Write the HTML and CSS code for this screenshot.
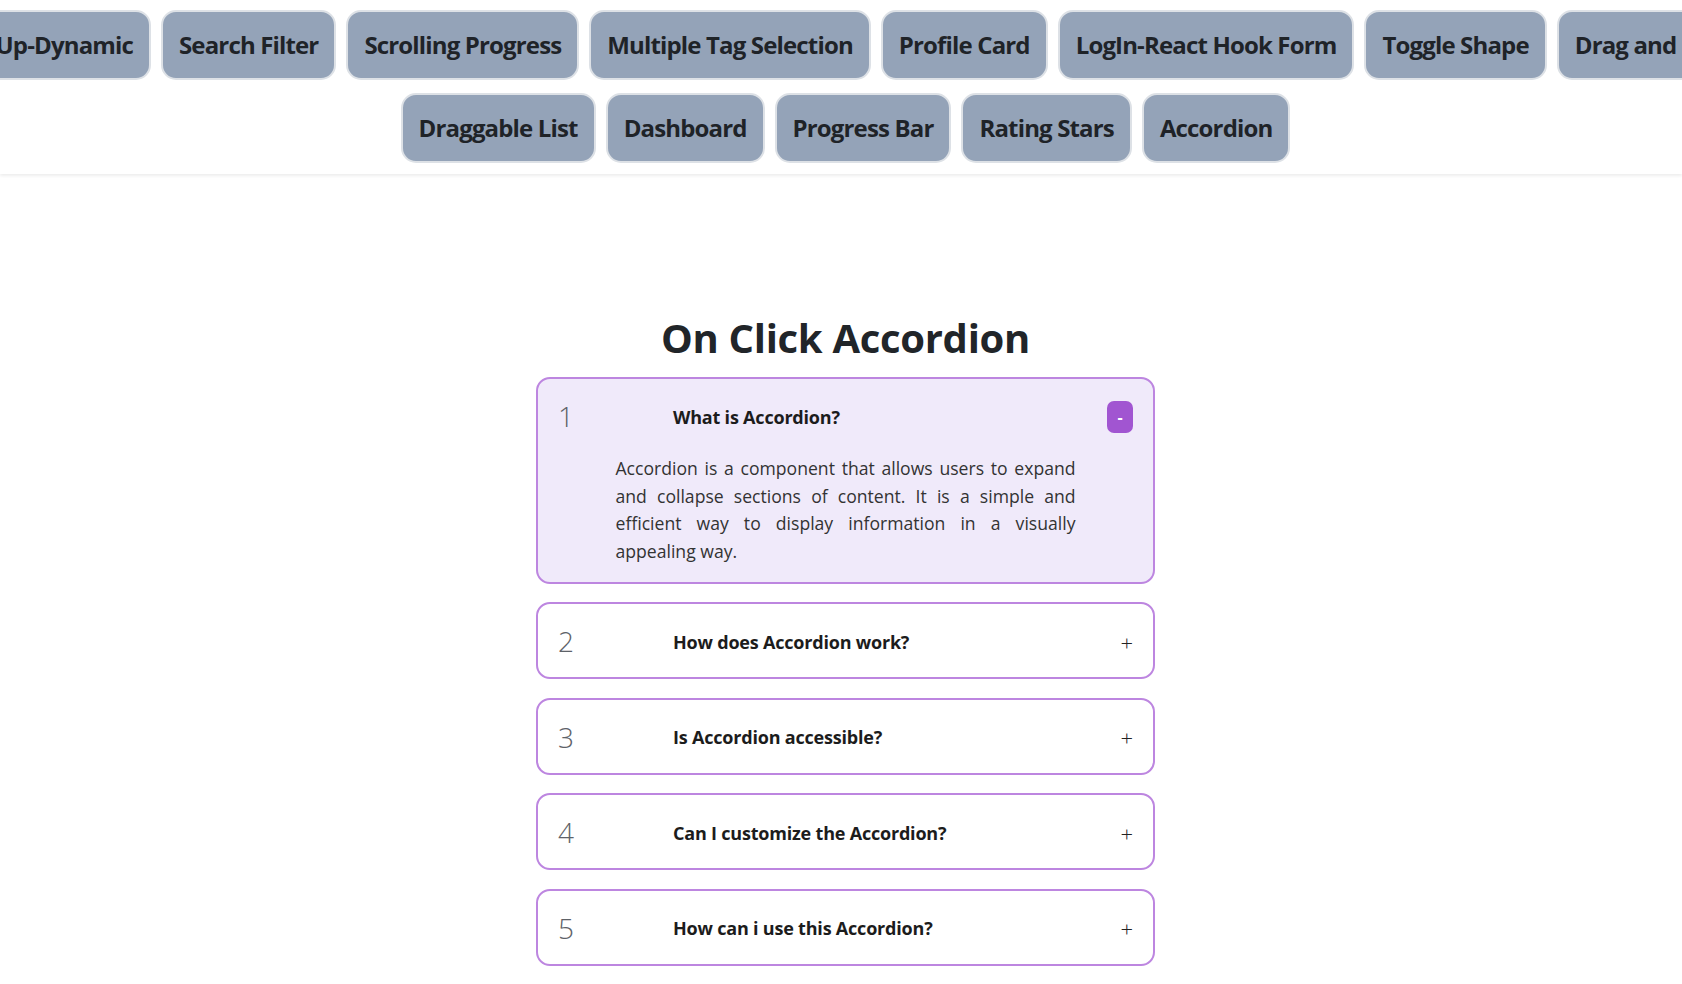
FILE: index.html
```html
<!DOCTYPE html>
<html lang="en">
<head>
<meta charset="utf-8">
<title>On Click Accordion</title>
<link rel="stylesheet" href="styles.css">
</head>
<body>
<nav class="topnav">
  <div class="nav-row nav-row-top">
    <div class="nav-lead"><a class="nav-btn" href="#">Pop-Up-Dynamic</a></div>
    <a class="nav-btn" href="#">Search Filter</a>
    <a class="nav-btn" href="#">Scrolling Progress</a>
    <a class="nav-btn" href="#">Multiple Tag Selection</a>
    <a class="nav-btn" href="#">Profile Card</a>
    <a class="nav-btn" href="#">LogIn-React Hook Form</a>
    <a class="nav-btn" href="#">Toggle Shape</a>
    <a class="nav-btn" href="#">Drag and Drop</a>
  </div>
  <div class="nav-row nav-row-bottom">
    <a class="nav-btn" href="#">Draggable List</a>
    <a class="nav-btn" href="#">Dashboard</a>
    <a class="nav-btn" href="#">Progress Bar</a>
    <a class="nav-btn" href="#">Rating Stars</a>
    <a class="nav-btn" href="#">Accordion</a>
  </div>
</nav>
<main class="page">
  <h1 class="title">On Click Accordion</h1>
  <div class="accordion">
    <div class="acc-item open">
      <div class="acc-head">
        <span class="acc-num">1</span>
        <span class="acc-q">What is Accordion?</span>
        <button class="acc-toggle" type="button">-</button>
      </div>
      <p class="acc-body">Accordion is a component that allows users to expand and collapse sections of content. It is a simple and efficient way to display information in a visually appealing way.</p>
    </div>
    <div class="acc-item">
      <div class="acc-head">
        <span class="acc-num">2</span>
        <span class="acc-q">How does Accordion work?</span>
        <span class="acc-plus">+</span>
      </div>
    </div>
    <div class="acc-item">
      <div class="acc-head">
        <span class="acc-num">3</span>
        <span class="acc-q">Is Accordion accessible?</span>
        <span class="acc-plus">+</span>
      </div>
    </div>
    <div class="acc-item">
      <div class="acc-head">
        <span class="acc-num">4</span>
        <span class="acc-q">Can I customize the Accordion?</span>
        <span class="acc-plus">+</span>
      </div>
    </div>
    <div class="acc-item">
      <div class="acc-head">
        <span class="acc-num">5</span>
        <span class="acc-q">How can i use this Accordion?</span>
        <span class="acc-plus">+</span>
      </div>
    </div>
  </div>
</main>
</body>
</html>
```
FILE: styles.css
```css
* { box-sizing: border-box; }
html, body { margin: 0; padding: 0; }
body {
  font-family: "Open Sans", "Noto Sans", sans-serif;
  background: #ffffff;
  color: #212529;
  overflow-x: hidden;
}
.topnav {
  padding: 10px 0 11px;
  background: #ffffff;
  box-shadow: 0 2px 3px rgba(0, 0, 0, 0.07);
  overflow: hidden;
}
.nav-row {
  display: flex;
  gap: 10px;
}
.nav-row-top { flex-wrap: nowrap; }
.nav-lead {
  flex: none;
  width: 151px;
  display: flex;
  justify-content: flex-end;
}
.nav-row-bottom {
  justify-content: center;
  margin-top: 13px;
  padding-left: 9px;
}
.nav-btn {
  flex: none;
  display: block;
  background: #94a3b8;
  border: 2px solid #dde1e6;
  border-radius: 15px;
  padding: 17px 16px;
  font-size: 24px;
  line-height: 32px;
  font-weight: 700;
  letter-spacing: -0.85px;
  color: #1f2328;
  white-space: nowrap;
  text-decoration: none;
}
.page {
  padding: 140px 0 40px 9px;
}
.title {
  margin: 0 0 15px;
  text-align: center;
  font-size: 40px;
  line-height: 48px;
  font-weight: 700;
  letter-spacing: -0.3px;
  color: #212529;
}
.accordion {
  width: 619px;
  margin: 0 auto;
  display: flex;
  flex-direction: column;
  gap: 18.5px;
}
.acc-item {
  border: 2px solid #bd86e0;
  border-radius: 14px;
  padding: 20px 20px 18px;
  background: #ffffff;
}
.acc-item.open {
  background: #f0eafa;
  padding-bottom: 16.5px;
}
.acc-head {
  display: flex;
  align-items: center;
  height: 35px;
}
.acc-num {
  flex: none;
  width: 115px;
  font-size: 28px;
  font-weight: 300;
  line-height: 35px;
  color: #5e6268;
}
.acc-q {
  flex: 1;
  font-size: 18px;
  font-weight: 700;
  letter-spacing: -0.2px;
  color: #1c1c1c;
}
.acc-toggle {
  flex: none;
  width: 26px;
  height: 32px;
  padding: 0;
  border: none;
  border-radius: 7px;
  background: #a155d1;
  color: #ffffff;
  font-family: "Open Sans", sans-serif;
  font-size: 16px;
  font-weight: 700;
  line-height: 32px;
}
.acc-plus {
  flex: none;
  font-size: 22px;
  font-weight: 300;
  line-height: 1;
  color: #222222;
}
.acc-body {
  width: 80%;
  margin: 21px auto 0;
  font-size: 17.6px;
  line-height: 27.5px;
  text-align: justify;
  color: #333333;
}
```
